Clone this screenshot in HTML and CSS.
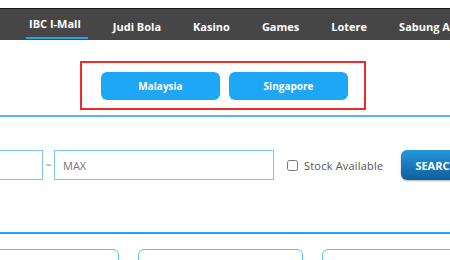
FILE: index.html
```html
<!DOCTYPE html>
<html lang="id">
  <head>
    <meta charset="UTF-8" />
    <meta name="viewport" content="width=device-width, initial-scale=1.0" />
    <title>IBC I-Mall</title>
    <link rel="stylesheet" href="styles.css">
  </head>
  <body>
    <div class="top-gap"></div>
    <nav class="main-nav">
      <a href="#" class="nav-item active">IBC I-Mall</a>
      <a href="#" class="nav-item">Judi Bola</a>
      <a href="#" class="nav-item">Kasino</a>
      <a href="#" class="nav-item">Games</a>
      <a href="#" class="nav-item">Lotere</a>
      <a href="#" class="nav-item">Sabung Ayam</a>
    </nav>

    <div class="region-wrap">
      <div class="region-box">
        <button class="btn-region">Malaysia</button>
        <button class="btn-region">Singapore</button>
      </div>
    </div>

    <div class="filter-section">
      <div class="filter-row">
        <input type="text" class="price-input price-min" placeholder="MIN" />
        <span class="tilde">~</span>
        <input type="text" class="price-input price-max" placeholder="MAX" />
        <label class="stock-check">
          <input type="checkbox" />
          <span>Stock Available</span>
        </label>
        <button class="btn-search">SEARCH</button>
      </div>
    </div>

    <div class="product-list">
      <div class="product-card"></div>
      <div class="product-card"></div>
      <div class="product-card"></div>
    </div>
  </body>
</html>
```

FILE: styles.css
```css
:root {
  --blue: #1ea7f7;
  --line: #4dbaf4;
  --dark: #464646;
  --text: #555;
}

* {
  box-sizing: border-box;
  margin: 0;
  padding: 0;
  font-family: "Open Sans", "DejaVu Sans", sans-serif;
}

body {
  background: #fff;
  width: 450px;
  overflow: hidden;
}

.top-gap {
  height: 8px;
}

.main-nav {
  display: flex;
  align-items: center;
  gap: 32px;
  height: 32px;
  padding-left: 29px;
  background: var(--dark);
  border-top: 1px solid #151515;
  white-space: nowrap;
}

.nav-item {
  position: relative;
  flex-shrink: 0;
  color: #fff;
  font-size: 11px;
  font-weight: 700;
  text-decoration: none;
  padding-top: 4px;
}

.nav-item.active {
  padding-top: 0;
  margin-bottom: 3px;
}

.nav-item.active::after {
  content: "";
  position: absolute;
  left: -3px;
  right: -7px;
  bottom: -8px;
  height: 2px;
  background: #2aa3e3;
}

.region-wrap {
  padding: 21px 0 0 80px;
}

.region-box {
  display: flex;
  gap: 9px;
  width: 286px;
  height: 49px;
  padding: 9px 0 0 19px;
  border: 2px solid #f02a2a;
}

.btn-region {
  width: 119px;
  height: 28px;
  background: var(--blue);
  color: #fff;
  border: none;
  border-radius: 6px;
  font-size: 10px;
  font-weight: 700;
}

.filter-section {
  margin-top: 5px;
  border-top: 2px solid var(--line);
  padding-top: 33px;
}

.filter-row {
  display: flex;
  align-items: center;
  margin-left: -57px;
  width: 600px;
  height: 30px;
  white-space: nowrap;
}

.filter-row > * {
  flex-shrink: 0;
}

.price-input {
  height: 30px;
  border: 1px solid #7cc8f4;
  padding: 0 8px;
  font-size: 11px;
  color: var(--text);
  outline: none;
}

.price-input::placeholder {
  color: #777;
}

.price-min {
  width: 100px;
}

.tilde {
  width: 11px;
  text-align: center;
  font-size: 10px;
  color: #888;
}

.price-max {
  width: 220px;
}

.stock-check {
  display: flex;
  align-items: center;
  gap: 6px;
  margin-left: 13px;
  font-size: 11px;
  letter-spacing: 0.2px;
  color: var(--text);
}

.stock-check input {
  width: 11px;
  height: 11px;
  margin: 0;
}

.btn-search {
  margin-left: 18px;
  width: 90px;
  height: 30px;
  padding-left: 14px;
  text-align: left;
  background: linear-gradient(#2597dc, #0d5f9c);
  color: #fff;
  border: none;
  border-radius: 6px;
  font-size: 11px;
  font-weight: 700;
  box-shadow: 0 1px 2px rgba(0, 0, 0, 0.3);
}

.product-list {
  margin-top: 52px;
  border-top: 2px solid #1aa8f8;
  padding-top: 15px;
  display: flex;
  gap: 19px;
  margin-left: -46px;
  width: 600px;
}

.product-card {
  flex: 0 0 165px;
  height: 40px;
  border: 1px solid #5cc0f8;
  border-radius: 6px;
}
```
